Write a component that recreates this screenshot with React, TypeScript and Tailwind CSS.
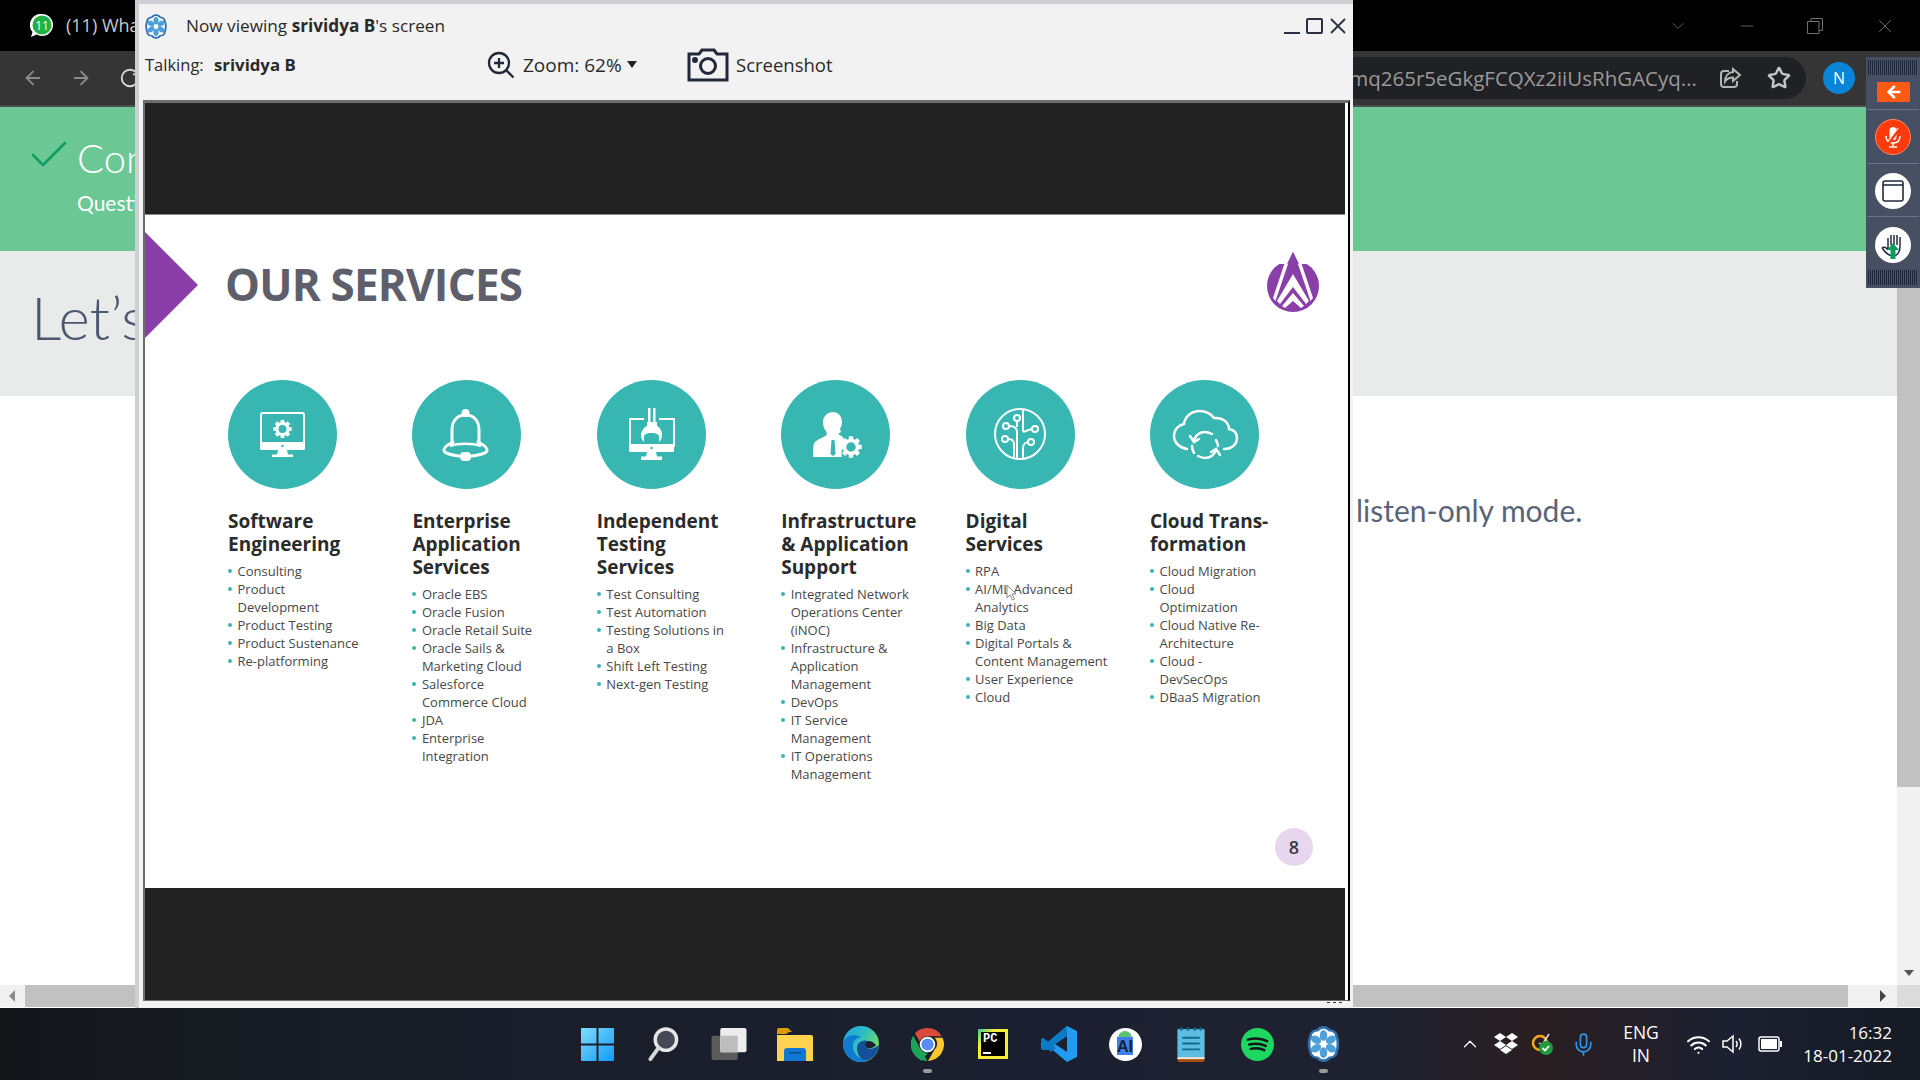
import React from "react";
import { ArrowLeft, ArrowRight, RotateCw, Star, Check, ChevronDown, Minus, X, ChevronUp, Mic, Wifi } from "lucide-react";

type Col = { title: string[]; icon: React.ReactNode; items: string[][] };

const Gear = ({ cx, cy, r, w = 3 }: { cx: number; cy: number; r: number; w?: number }) => (
  <g>
    <circle cx={cx} cy={cy} r={r} fill="none" stroke="#fff" strokeWidth={w} />
    {[0, 45, 90, 135, 180, 225, 270, 315].map((a) => (
      <rect key={a} x={cx - w / 1.6} y={cy - r - w * 1.2} width={w * 1.25} height={w * 1.1} fill="#fff" transform={`rotate(${a} ${cx} ${cy})`} />
    ))}
  </g>
);

const icons = {
  monitor: (
    <svg viewBox="0 0 109 109" className="w-full h-full">
      <rect x="33" y="33" width="43" height="35" rx="2" fill="none" stroke="#fff" strokeWidth="2" />
      <rect x="32" y="62" width="45" height="8" rx="1.5" fill="#fff" />
      <circle cx="54.5" cy="66" r="1.2" fill="#38B6B2" />
      <path d="M50 70h9l1 4.5h5v2.5H44v-2.5h5z" fill="#fff" />
      <Gear cx={54.5} cy={49} r={5.5} w={3} />
    </svg>
  ),
  bell: (
    <svg viewBox="0 0 109 109" className="w-full h-full">
      <circle cx="53.5" cy="33" r="4" fill="#fff" />
      <path d="M40 66V50c0-10 6-15 13.500-15S67 40 67 50v16" fill="none" stroke="#fff" strokeWidth="3" />
      <path d="M41 62c-6 3-10 6-9 9 1 2 7 4 15 5M66 62c6 3 10 6 9 9-1 2-7 4-15 5" fill="none" stroke="#fff" strokeWidth="3" strokeLinecap="round" />
      <path d="M38 66c8-3 23-3 31 0" fill="none" stroke="#fff" strokeWidth="2.500" />
      <rect x="48" y="72" width="11" height="9" rx="4" fill="#fff" />
    </svg>
  ),
  wrench: (
    <svg viewBox="0 0 109 109" className="w-full h-full">
      <path d="M47 39H33v27h44V39H62" fill="none" stroke="#fff" strokeWidth="2" />
      <rect x="32" y="64" width="45" height="8" rx="1.5" fill="#fff" />
      <circle cx="54.500" cy="68" r="1.200" fill="#38B6B2" />
      <path d="M50 72h9l1 4.500h5V80H44v-3.500h5z" fill="#fff" />
      <path d="M51 28h2.500v15H51zM56 28h2.500v15H56z" fill="#fff" />
      <path d="M50 42h10v4c4 2 5 6 5 9 0 3-1 5-3 7v-5c0-3-3-4-7.500-4S47 54 47 57v5c-2-2-3-4-3-7 0-3 2-7 6-9z" fill="#fff" />
    </svg>
  ),
  person: (
    <svg viewBox="0 0 109 109" className="w-full h-full">
      <path d="M52 32c5 0 9 4 9 10 0 3-1 5-2 7l1 3-3 2 5 3c1 2 1 7 1 9-2 2-3 6-2 11H32c0-6 0-13 2-15 4-4 11-5 12-8l-1-3c-2-2-3-5-3-9 0-6 5-10 10-10z" fill="#fff" />
      <path d="M50.500 60h3l1 14-2.500 2-2.500-2z" fill="#38B6B2" />
      <Gear cx={70} cy={67} r={6.5} w={3.500} />
    </svg>
  ),
  circuit: (
    <svg viewBox="0 0 109 109" className="w-full h-full" fill="none" stroke="#fff" strokeWidth="2">
      <circle cx="54" cy="54" r="25" />
      <circle cx="51" cy="38" r="3" />
      <circle cx="40" cy="46" r="3" />
      <circle cx="39" cy="59" r="3" />
      <circle cx="69" cy="49" r="3" />
      <circle cx="65" cy="62" r="3" />
      <path d="M51 41v6M43 46c5 0 8 2 8 6v27M42 59c4 0 6 2 6 5v13M57 30v20c0 4 3 0 9-1M57 79V68c0-4 3-6 6-6" />
    </svg>
  ),
  cloud: (
    <svg viewBox="0 0 109 109" className="w-full h-full" fill="none" stroke="#fff" strokeWidth="2.500" strokeLinecap="round">
      <path d="M37 69c-7-1-13-6-13-13 0-7 5-11 10-12 1-8 8-13 16-13 6 0 11 3 14 7 9-1 15 5 15 11 6 1 8 5 8 9 0 6-5 11-13 11" />
      <path d="M44 60c2-5 6-8 11-8 3 0 5 1 7 2M66 70c-2 5-6 8-11 8-3 0-5-1-7-2M66 60c1 2 2 4 2 6M42 66c0 2 1 5 2 7" />
      <path d="M40 56l4 6 5-3M70 75l-4-6-5 3" />
    </svg>
  ),
};

const cols: Col[] = [
  { title: ["Software", "Engineering"], icon: icons.monitor, items: [["Consulting"], ["Product", "Development"], ["Product Testing"], ["Product Sustenance"], ["Re-platforming"]] },
  { title: ["Enterprise", "Application", "Services"], icon: icons.bell, items: [["Oracle EBS"], ["Oracle Fusion"], ["Oracle Retail Suite"], ["Oracle Sails &", "Marketing Cloud"], ["Salesforce", "Commerce Cloud"], ["JDA"], ["Enterprise", "Integration"]] },
  { title: ["Independent", "Testing", "Services"], icon: icons.wrench, items: [["Test Consulting"], ["Test Automation"], ["Testing Solutions in", "a Box"], ["Shift Left Testing"], ["Next-gen Testing"]] },
  { title: ["Infrastructure", "& Application", "Support"], icon: icons.person, items: [["Integrated Network", "Operations Center", "(iNOC)"], ["Infrastructure &", "Application", "Management"], ["DevOps"], ["IT Service", "Management"], ["IT Operations", "Management"]] },
  { title: ["Digital", "Services"], icon: icons.circuit, items: [["RPA"], ["AI/ML Advanced", "Analytics"], ["Big Data"], ["Digital Portals &", "Content Management"], ["User Experience"], ["Cloud"]] },
  { title: ["Cloud Trans-", "formation"], icon: icons.cloud, items: [["Cloud Migration"], ["Cloud", "Optimization"], ["Cloud Native Re-", "Architecture"], ["Cloud -", "DevSecOps"], ["DBaaS Migration"]] },
];

const Flower = ({ className }: { className: string }) => (
  <svg viewBox="0 0 36 40" className={className}>
    <path d="M18 0c4 0 6 2 8 4 4 0 8 3 8 8 2 3 2 13 0 16 0 5-4 8-8 8-2 2-4 4-8 4s-6-2-8-4c-4 0-8-3-8-8-2-3-2-13 0-16 0-5 4-8 8-8 2-2 4-4 8-4z" fill="#2f6fae" />
    <path d="M18 3c3 0 5 2 6 3 4 0 7 2 7 6 2 3 2 13 0 16 0 4-3 6-7 6-1 1-3 3-6 3s-5-2-6-3c-4 0-7-2-7-6-2-3-2-13 0-16 0-4 3-6 7-6 1-1 3-3 6-3z" fill="#fff" />
    {[0, 60, 120, 180, 240, 300].map((a) => (
      <ellipse key={a} cx="18" cy="10.500" rx="4.200" ry="6" fill="#4f9fd8" transform={`rotate(${a} 18 20)`} />
    ))}
    <circle cx="18" cy="20" r="2.500" fill="#fff" />
  </svg>
);

const Grille = () => (
  <div className="h-[15px] mx-[2px] bg-[repeating-linear-gradient(90deg,#1d2433_0px,#1d2433_1px,#4a5367_1px,#4a5367_2px)]" />
);

const Divider = () => <div className="h-px mx-[1px] bg-[#6b7488]" />;

function Browser() {
  return (
    <div className="h-[1008px] flex flex-col">
      <div className="h-[51px] shrink-0 bg-black flex items-center pl-[30px]">
        <svg viewBox="0 0 24 26" className="w-[24px] h-[26px]">
          <path d="M12 1a11 11 0 0 1 0 22c-2 0-4-.5-5.500-1.400L1 24l1.500-5A11 11 0 0 1 12 1z" fill="#fff" />
          <circle cx="12" cy="12" r="9.500" fill="#1fb141" />
          <text x="12" y="16.500" textAnchor="middle" fill="#fff" fontSize="12" fontFamily="Open Sans, sans-serif">11</text>
        </svg>
        <span className="ml-[12px] text-[18px] text-[#c9c9c9] font-['Open_Sans',sans-serif]">(11) What</span>
        <div className="ml-auto flex items-center text-[#6f6f6f]">
          <ChevronDown className="w-[20px] h-[20px] mr-[49px]" strokeWidth={1} />
          <Minus className="w-[20px] h-[20px] mr-[50px]" strokeWidth={1} />
          <svg viewBox="0 0 16 16" className="w-[16px] h-[16px] mr-[51px]" fill="none" stroke="#6f6f6f">
            <path d="M.5 3.500h11.500v12H.5zM4 3.500V.5h11.500v12H12" />
          </svg>
          <X className="w-[22px] h-[22px] mr-[24px]" strokeWidth={1} />
        </div>
      </div>
      <div className="h-[56px] shrink-0 bg-[#353535] border-b-2 border-[#4c4c4c] flex items-center">
        <ArrowLeft className="ml-[22px] w-[22px] h-[22px] text-[#8a8a8a]" strokeWidth={2} />
        <ArrowRight className="ml-[26px] w-[22px] h-[22px] text-[#8a8a8a]" strokeWidth={2} />
        <RotateCw className="ml-[27px] w-[22px] h-[22px] text-[#d8d8d8]" strokeWidth={2} />
        <div className="ml-auto w-[600px] h-[42px] bg-[#202124] rounded-r-[21px] flex items-center justify-end">
          <span className="mr-[21px] text-[20.500px] text-[#9a9a9a] font-['Open_Sans',sans-serif] whitespace-nowrap">/mq265r5eGkgFCQXz2iiUsRhGACyq...</span>
          <svg viewBox="0 0 24 24" className="w-[24px] h-[24px] mr-[25px]" fill="none" stroke="#b5b5b5" strokeWidth="2">
            <path d="M11 5H6a3 3 0 0 0-3 3v10a3 3 0 0 0 3 3h10a3 3 0 0 0 3-3v-3" />
            <path d="M15 3l7 6-7 6v-3.500c-4 0-6 1-8 4 0-5 3-9 8-9.500z" />
          </svg>
          <Star className="w-[24px] h-[24px] mr-[15px] text-[#c4c4c4]" strokeWidth={2.500} />
        </div>
        <div className="ml-[17px] mr-[65px] w-[32px] h-[32px] rounded-full bg-[#0A84D6] flex items-center justify-center text-[16px] text-white font-['Open_Sans',sans-serif]">N</div>
      </div>
      <div className="flex-1 flex min-h-0">
        <div className="flex-1 flex flex-col min-w-0">
          <div className="h-[144px] bg-[#6BC895] pl-[25px] pt-[26px]">
            <div className="flex items-center h-[50px]">
              <Check className="w-[48px] h-[48px] mt-[-6px] text-[#0f9d63]" strokeWidth={1.300} />
              <span className="ml-[4px] text-[40px] text-white font-['Lato',sans-serif] font-light">Con</span>
            </div>
            <div className="ml-[52px] mt-[6px] text-[21px] leading-[28px] text-white font-['Lato',sans-serif]">Questi</div>
          </div>
          <div className="h-[145px] bg-[#E9EBEA] pl-[31px] pt-[24px] text-[60px] leading-[84px] text-[#4c5770] font-['Lato',sans-serif] font-light">Let’s</div>
          <div className="flex-1 bg-white pl-[1356px] pt-[95px] text-[30px] leading-[38px] text-[#5a6478] font-['Lato',sans-serif] whitespace-nowrap">listen-only mode.</div>
        </div>
        <div className="w-[23px] bg-[#f1f1f1] flex flex-col">
          <div className="h-[680px] bg-[#c1c1c1]" />
          <div className="mt-auto h-[24px] flex items-center justify-center">
            <div className="w-0 h-0 border-x-[5px] border-x-transparent border-t-[6px] border-t-[#555]" />
          </div>
        </div>
      </div>
      <div className="h-[23px] shrink-0 bg-[#f1f1f1] flex border-b border-white">
        <div className="w-[25px] flex items-center justify-center pr-[2px]">
          <div className="w-0 h-0 border-y-[6px] border-y-transparent border-r-[6px] border-r-[#8a8a8a]" />
        </div>
        <div className="w-[1823px] bg-[#c1c1c1]" />
        <div className="w-[49px] flex items-center justify-end pr-[11px]">
          <div className="w-0 h-0 border-y-[6px] border-y-transparent border-l-[6px] border-l-[#444]" />
        </div>
        <div className="w-[23px] bg-[#dcdcdc]" />
      </div>
    </div>
  );
}

function Window() {
  return (
    <div className="absolute left-[135px] top-0 w-[1218px] h-[1008px] bg-[#f2f2f2] border-l-4 border-t-4 border-[#ccd0d5] flex flex-col font-['Open_Sans',sans-serif]">
      <div className="h-[44px] shrink-0 flex items-center pl-[6px]">
        <Flower className="w-[22px] h-[25px]" />
        <span className="ml-[19px] text-[17.200px] text-[#2a2a2a] whitespace-nowrap">Now viewing <b className="font-bold">srividya B</b>'s screen</span>
        <div className="ml-auto flex items-center text-[#2b3040]">
          <div className="w-[16px] h-[2px] mt-[13px] bg-[#2b3040] mr-[6px]" />
          <div className="w-[17px] h-[16px] border-2 border-[#2b3040] rounded-[2px] mr-[7px]" />
          <svg viewBox="0 0 16 16" className="w-[16px] h-[16px] mr-[7px]" fill="none" stroke="#2b3040" strokeWidth="1.800">
            <path d="M1 1l14 14M15 1L1 15" />
          </svg>
        </div>
      </div>
      <div className="h-[34px] shrink-0 flex items-center pl-[6px] text-[18px] text-[#2a2a2a] whitespace-nowrap">
        <span className="w-[69px] text-[16.500px]">Talking:</span>
        <span className="font-bold text-[16.800px] w-[273px]">srividya B</span>
        <svg viewBox="0 0 28 28" className="w-[28px] h-[28px]" fill="none" stroke="#232838" strokeWidth="2.300">
          <circle cx="12" cy="12" r="10" />
          <path d="M12 7v10M7 12h10M19 19l7.500 7.500" />
        </svg>
        <span className="ml-[8px] w-[104px] text-[19px]">Zoom: 62%</span>
        <div className="w-0 h-0 border-x-[5px] border-x-transparent border-t-[7px] border-t-[#222] mt-[-2px]" />
        <svg viewBox="0 0 42 34" className="ml-[50px] w-[42px] h-[34px]" fill="none" stroke="#232838" strokeWidth="3">
          <path d="M2 6h10l3-4h12l3 4h10v26H2z" />
          <circle cx="21" cy="18" r="7.500" />
          <circle cx="8" cy="12" r="1.500" fill="#232838" />
        </svg>
        <span className="ml-[7px] text-[18.500px]">Screenshot</span>
      </div>
      <div className="flex-1 mt-[18px] ml-[4px] mr-[3px] mb-[7px] bg-white border-t-[3px] border-b border-l-2 border-r-2 border-t-[#6d6d6d] border-b-[#6d6d6d] border-l-[#6d6d6d] border-r-black pr-[3px] flex flex-col min-h-0 relative">
        <div className="h-[111px] shrink-0 bg-[#222222]" />
        <Slide />
        <div className="h-[112px] shrink-0 bg-[#222222]" />
        <div className="absolute right-[3px] bottom-[-3px] w-[18px] h-[1px] bg-[repeating-linear-gradient(90deg,#333_0px,#333_3px,#fff_3px,#fff_6px)]" />
      </div>
    </div>
  );
}

function Slide() {
  return (
    <div className="h-[674px] shrink-0 bg-white flex flex-col border-t border-t-[#8a8a8a]">
      <div className="mt-[17px] h-[106px] flex items-center shrink-0">
        <svg viewBox="0 0 53 106" className="w-[53px] h-[106px]">
          <path d="M0 0l53 53L0 106z" fill="#8A3FA8" />
        </svg>
        <h1 className="ml-[27px] mt-[-2px] text-[44px] font-bold text-[#5f5f6b] tracking-[-0.800px] font-['Open_Sans',sans-serif] whitespace-nowrap">OUR SERVICES</h1>
        <svg viewBox="0 0 52 60" className="ml-auto mr-[26px] mt-[-6px] w-[52px] h-[60px]">
          <circle cx="26" cy="34" r="26" fill="#8A3FA8" />
          <path d="M0 0h52v12H0z" fill="#fff" />
          <path d="M26 0L42 34 26 24 10 34z" fill="#8A3FA8" />
          <path d="M26 0l-6 12L6 48l3 3L26 12l17 39 3-3L32 12z" fill="#8A3FA8" />
          <path d="M18 10L6 46l2.500 3L21 12zM34 10l12 36-2.500 3L31 12z" fill="#fff" />
          <path d="M26 22L10 49l3 3 13-17 13 17 3-3z" fill="#fff" />
          <path d="M26 41L15 54l3 2 8-7 8 7 3-2z" fill="#fff" />
        </svg>
      </div>
      <div className="mt-[42px] pl-[83px] grid grid-cols-[repeat(6,184.400px)] items-start">
        {cols.map((c) => (
          <div key={c.title[0]}>
            <div className="w-[109px] h-[109px] rounded-full bg-[#38B6B2]">{c.icon}</div>
            <h3 className="mt-[21px] text-[19px] leading-[23px] font-bold text-[#2b2b2b] font-['Open_Sans',sans-serif] whitespace-nowrap">
              {c.title.map((t) => (
                <div key={t}>{t}</div>
              ))}
            </h3>
            <ul className="mt-[6px] text-[13px] leading-[18px] text-[#484848] font-['Open_Sans',sans-serif] whitespace-nowrap">
              {c.items.map((lines) => (
                <li key={lines[0]} className="flex">
                  <span className="w-[9.500px] shrink-0 pt-[7px]">
                    <span className="block w-[4px] h-[4px] rounded-full bg-[#38B6B2]" />
                  </span>
                  <span>
                    {lines.map((l) => (
                      <div key={l}>{l}</div>
                    ))}
                  </span>
                </li>
              ))}
            </ul>
          </div>
        ))}
      </div>
      <div className="mt-auto mb-[22px] mr-[32px] self-end w-[38px] h-[38px] rounded-full bg-[#E8D6EF] flex items-center justify-center text-[18px] font-semibold text-[#3a3a3a] font-['Open_Sans',sans-serif]">8</div>
    </div>
  );
}

function Floater() {
  return (
    <div className="absolute left-[1866px] top-[57px] w-[54px] h-[231px] bg-[#475062] pt-[3px] flex flex-col">
      <Grille />
      <div className="h-[34px] flex items-center justify-center">
        <div className="w-[33px] h-[20px] bg-[#FF5A14] rounded-[1px] flex items-center justify-center ml-[1px]">
          <ArrowLeft className="w-[18px] h-[18px] text-white" strokeWidth={3.500} />
        </div>
      </div>
      <Divider />
      <div className="h-[53px] flex items-center justify-center pt-[1px]">
        <div className="w-[36px] h-[36px] rounded-full bg-[#FF3A0C] border border-[#ff8a6a] flex items-center justify-center">
          <svg viewBox="0 0 24 24" className="w-[24px] h-[24px]" fill="#fff">
            <rect x="8.500" y="2" width="7" height="13" rx="3.500" />
            <path d="M5 11c0 5 3 7 7 7s7-2 7-7M12 18v3M8 22h8" fill="none" stroke="#fff" strokeWidth="1.500" />
            <path d="M6 20L18 4" stroke="#FF3A0C" strokeWidth="3" />
            <path d="M6.500 17L17 3" stroke="#fff" strokeWidth="1.200" />
          </svg>
        </div>
      </div>
      <Divider />
      <div className="h-[53px] flex items-center justify-center pt-[2px]">
        <div className="w-[36px] h-[36px] rounded-full bg-white flex items-center justify-center">
          <svg viewBox="0 0 22 22" className="w-[22px] h-[22px]" fill="none" stroke="#232b3d" strokeWidth="1.600">
            <rect x="1" y="1" width="20" height="20" rx="2" />
            <path d="M1 5h20" />
          </svg>
        </div>
      </div>
      <Divider />
      <div className="h-[53px] flex items-center justify-center pt-[2px]">
        <div className="w-[36px] h-[36px] rounded-full bg-white flex items-center justify-center">
          <svg viewBox="0 0 28 28" className="w-[28px] h-[28px]">
            <path d="M3 17c2-2 5 0 6 2V7M12 4v10M15 4v10M18 4v10M21 6v10c0 5-3 9-7 9-5 0-8-4-11-8" fill="none" stroke="#232b3d" strokeWidth="1.500" />
            <path d="M14 12l6 7h-3.500v9h-5v-9H8z" fill="#0A9E5A" />
          </svg>
        </div>
      </div>
      <div className="mt-auto mb-[3px]">
        <Grille />
      </div>
    </div>
  );
}

function Taskbar() {
  return (
    <div className="h-[72px] bg-[linear-gradient(90deg,#131619_0%,#191d28_20%,#1b2030_55%,#1f2230_72%,#2a1f22_80%,#1c2030_90%,#161a24_100%)] flex text-white font-['Open_Sans',sans-serif]">
      <div className="w-[564px] shrink-0" />
      <div className="w-[792px] shrink-0 grid grid-cols-12">
        <Slot>
          <svg viewBox="0 0 36 36" className="w-[35px] h-[35px]">
            <defs>
              <linearGradient id="w" x1="0" y1="0" x2="1" y2="1">
                <stop offset="0" stopColor="#7fdcfb" />
                <stop offset="1" stopColor="#0f9bf5" />
              </linearGradient>
            </defs>
            <path d="M1 2a1 1 0 0 1 1-1h15v16H1zM19 1h15a1 1 0 0 1 1 1v15H19zM1 19h16v16H2a1 1 0 0 1-1-1zM19 19h16v15a1 1 0 0 1-1 1H19z" fill="url(#w)" />
          </svg>
        </Slot>
        <Slot>
          <svg viewBox="0 0 32 36" className="w-[32px] h-[35px]">
            <circle cx="19" cy="13" r="11" fill="#474a56" stroke="#e6e6e6" strokeWidth="3.500" />
            <path d="M11 22L3 33" stroke="#d8d8d8" strokeWidth="4" strokeLinecap="round" />
          </svg>
        </Slot>
        <Slot>
          <svg viewBox="0 0 36 36" className="w-[36px] h-[35px]">
            <rect x="0" y="9" width="27" height="25" rx="2" fill="#5b5b5b" />
            <rect x="9" y="1" width="27" height="25" rx="2" fill="#ededed" />
            <rect x="9" y="9" width="18" height="17" fill="#bdbdbd" />
          </svg>
        </Slot>
        <Slot>
          <svg viewBox="0 0 36 35" className="w-[36px] h-[35px]">
            <path d="M0 3a2 2 0 0 1 2-2h9l4 4h-3l-3 2H0z" fill="#d99b00" />
            <path d="M0 8h34a2 2 0 0 1 2 2v24H0z" fill="#ffd24f" />
            <path d="M7 24a3 3 0 0 1 3-3h16a3 3 0 0 1 3 3v10H7z" fill="#0f78d4" />
            <path d="M12 25h12v1.500H12z" fill="#0a4f94" />
          </svg>
        </Slot>
        <Slot>
          <svg viewBox="0 0 36 36" className="w-[36px] h-[36px]">
            <defs>
              <linearGradient id="e" x1="0" y1="0" x2="1" y2="0.600">
                <stop offset="0" stopColor="#1fa5e2" />
                <stop offset="0.500" stopColor="#2cbcc8" />
                <stop offset="1" stopColor="#7be05a" />
              </linearGradient>
            </defs>
            <circle cx="18" cy="18" r="18" fill="url(#e)" />
            <path d="M0 18C2 8 12 8 18 11 12 12 9 16 10 22 11 30 20 36 27 33 22 37 14 37 8 33 3 29 0 24 0 18z" fill="#0f7ad0" />
            <path d="M14 22C14 16 20 13 25 15 22 16 21 19 23 21 26 24 31 23 36 19 35 27 30 33 24 34 18 35 14 29 14 22z" fill="#14509a" />
            <path d="M25 15C29 15 31 17 33 19 30 23 25 23 23 21 21 19 22 16 25 15z" fill="#1b2030" />
          </svg>
        </Slot>
        <Slot dot>
          <svg viewBox="0 0 34 34" className="w-[33px] h-[33px]">
            <path d="M17 0a17 17 0 0 1 14.700 8.500H17a8.500 8.500 0 0 0-8 5.500L4 5.500A17 17 0 0 1 17 0z" fill="#db4b3c" />
            <path d="M2.300 8L9.500 21 17 34A17 17 0 0 1 2.300 8z" fill="#1fa35a" />
            <path d="M32.500 10a17 17 0 0 1-15 24l7-12a8.500 8.500 0 0 0 0-12z" fill="#fbc92e" />
            <path d="M9.500 21a8.500 8.500 0 0 0 8 4.500l-7 8.500-5-6z" fill="#1fa35a" />
            <circle cx="17" cy="17" r="8" fill="#fff" />
            <circle cx="17" cy="17" r="6.300" fill="#5a8bf2" />
          </svg>
        </Slot>
        <Slot>
          <div className="w-[30px] h-[30px] bg-[linear-gradient(135deg,#2ecf9a_0%,#f7ec3a_30%,#f7ec3a_100%)] p-[3px] flex">
            <div className="w-full h-full bg-black relative font-['Liberation_Mono',monospace]">
              <span className="absolute left-[2px] top-[1px] text-[12px] leading-[12px] text-white font-bold">PC</span>
              <span className="absolute left-[2px] bottom-[2px] w-[8px] h-[2px] bg-white" />
            </div>
          </div>
        </Slot>
        <Slot>
          <svg viewBox="0 0 36 36" className="w-[36px] h-[36px]">
            <path d="M26 0l10 5v26l-10 5L7 20 2 24 0 22.500V13.500L2 12l5 4zM26 10L14 18l12 8z" fill="#1f9cf0" />
            <path d="M0 13.500L2 12l13 10-5 4-10-9z" fill="#0f74b8" />
            <path d="M2 12l5 4 19-16v10L14 18 7 24 2 24 0 22.500z" fill="#0a7ac4" />
          </svg>
        </Slot>
        <Slot>
          <div className="w-[33px] h-[33px] rounded-full bg-white flex items-center justify-center relative overflow-hidden">
            <span className="absolute top-[3px] w-[14px] h-[8px] rounded-t-full bg-[#5cc274]" />
            <span className="absolute top-[9px] w-[16px] h-[18px] bg-[#3f7fe8]" />
            <span className="relative mt-[6px] text-[16px] leading-[16px] font-bold text-[#14213d] font-['Liberation_Sans',sans-serif]">AI</span>
          </div>
        </Slot>
        <Slot>
          <svg viewBox="0 0 28 36" className="w-[28px] h-[35px]">
            <rect x="0" y="2" width="28" height="29" rx="1" fill="#5cbde0" />
            <path d="M0 31h28v3a2 2 0 0 1-2 2H2a2 2 0 0 1-2-2z" fill="#a9500f" />
            <path d="M0 31h28v2H0z" fill="#eee" />
            <path d="M5 10h18v2H5zM5 16h18v2H5zM5 22h18v2H5z" fill="#11698f" />
            {[4, 11, 18, 24].map((x) => (
              <circle key={x} cx={x} cy="2" r="1.800" fill="#0f6b8a" />
            ))}
          </svg>
        </Slot>
        <Slot>
          <svg viewBox="0 0 34 34" className="w-[33px] h-[33px]">
            <circle cx="17" cy="17" r="17" fill="#1ed760" />
            <path d="M7 12c7-2 14-1.500 20 1.500M8.500 17c6-1.500 12-1 17 1.500M10 21.500c5-1 10-.8 14 1.300" fill="none" stroke="#15171c" strokeWidth="2.600" strokeLinecap="round" />
          </svg>
        </Slot>
        <Slot dot>
          <Flower className="w-[33px] h-[36px]" />
        </Slot>
      </div>
      <div className="flex-1 flex items-center pl-[103px] relative">
        <ChevronUp className="w-[22px] h-[22px]" strokeWidth={1.300} />
        <svg viewBox="0 0 24 22" className="ml-[13px] w-[24px] h-[22px]" fill="#fff">
          <path d="M6 0l6 4-6 4-6-4zM18 0l6 4-6 4-6-4zM0 12l6-4 6 4-6 4zM24 12l-6-4-6 4 6 4zM6 17l6-4 6 4-6 4z" />
        </svg>
        <svg viewBox="0 0 24 24" className="ml-[12px] w-[24px] h-[24px]" fill="none">
          <circle cx="10" cy="11" r="7" stroke="#f2a81d" strokeWidth="2.500" />
          <path d="M9 11l3 2 7-11" stroke="#ddd" strokeWidth="1.500" />
          <circle cx="16" cy="16" r="7" fill="#1f9b3c" />
          <path d="M12.500 16l2.500 2.500 4-4.500" stroke="#fff" strokeWidth="1.800" />
        </svg>
        <Mic className="ml-[17px] w-[25px] h-[25px] text-[#2f95e8]" strokeWidth={1.600} />
        <div className="ml-[22px] w-[46px] text-center text-[17.500px] leading-[23.500px]">ENG<br />IN</div>
        <Wifi className="ml-[22px] w-[25px] h-[25px]" strokeWidth={2} />
        <svg viewBox="0 0 24 24" className="ml-[10px] w-[24px] h-[24px]" fill="none" stroke="#fff" strokeWidth="1.500">
          <path d="M2 9h4l6-5v16l-6-5H2z" />
          <path d="M15 9c1.500 2 1.500 4 0 6M18 6.500c2.500 3 2.500 8 0 11" />
        </svg>
        <svg viewBox="0 0 24 16" className="ml-[13px] w-[24px] h-[16px]">
          <rect x="1" y="1" width="20" height="14" rx="2" fill="none" stroke="#fff" strokeWidth="1.500" />
          <rect x="3" y="3" width="16" height="10" fill="#fff" />
          <rect x="22" y="5" width="2" height="6" fill="#fff" />
        </svg>
        <div className="absolute right-[28px] top-[13px] text-right text-[17px] leading-[23px] whitespace-nowrap">16:32<br />18-01-2022</div>
      </div>
    </div>
  );
}

const Slot = ({ children, dot }: { children: React.ReactNode; dot?: boolean }) => (
  <div className="relative flex items-center justify-center h-[72px]">
    {children}
    {dot && <span className="absolute bottom-[7px] w-[9px] h-[4px] rounded-full bg-[#9a9a9a]" />}
  </div>
);

export default function App() {
  return (
    <div className="relative w-[1920px] h-[1080px] overflow-hidden bg-white">
      <Browser />
      <Taskbar />
      <Window />
      <Floater />
      <svg viewBox="0 0 12 17" className="absolute left-[1006px] top-[584px] w-[12px] h-[17px]">
        <path d="M1 1v13l3-3 2.500 5 2-1-2.500-5h4z" fill="#fff" stroke="#8a8a8a" strokeWidth="1" />
      </svg>
    </div>
  );
}
